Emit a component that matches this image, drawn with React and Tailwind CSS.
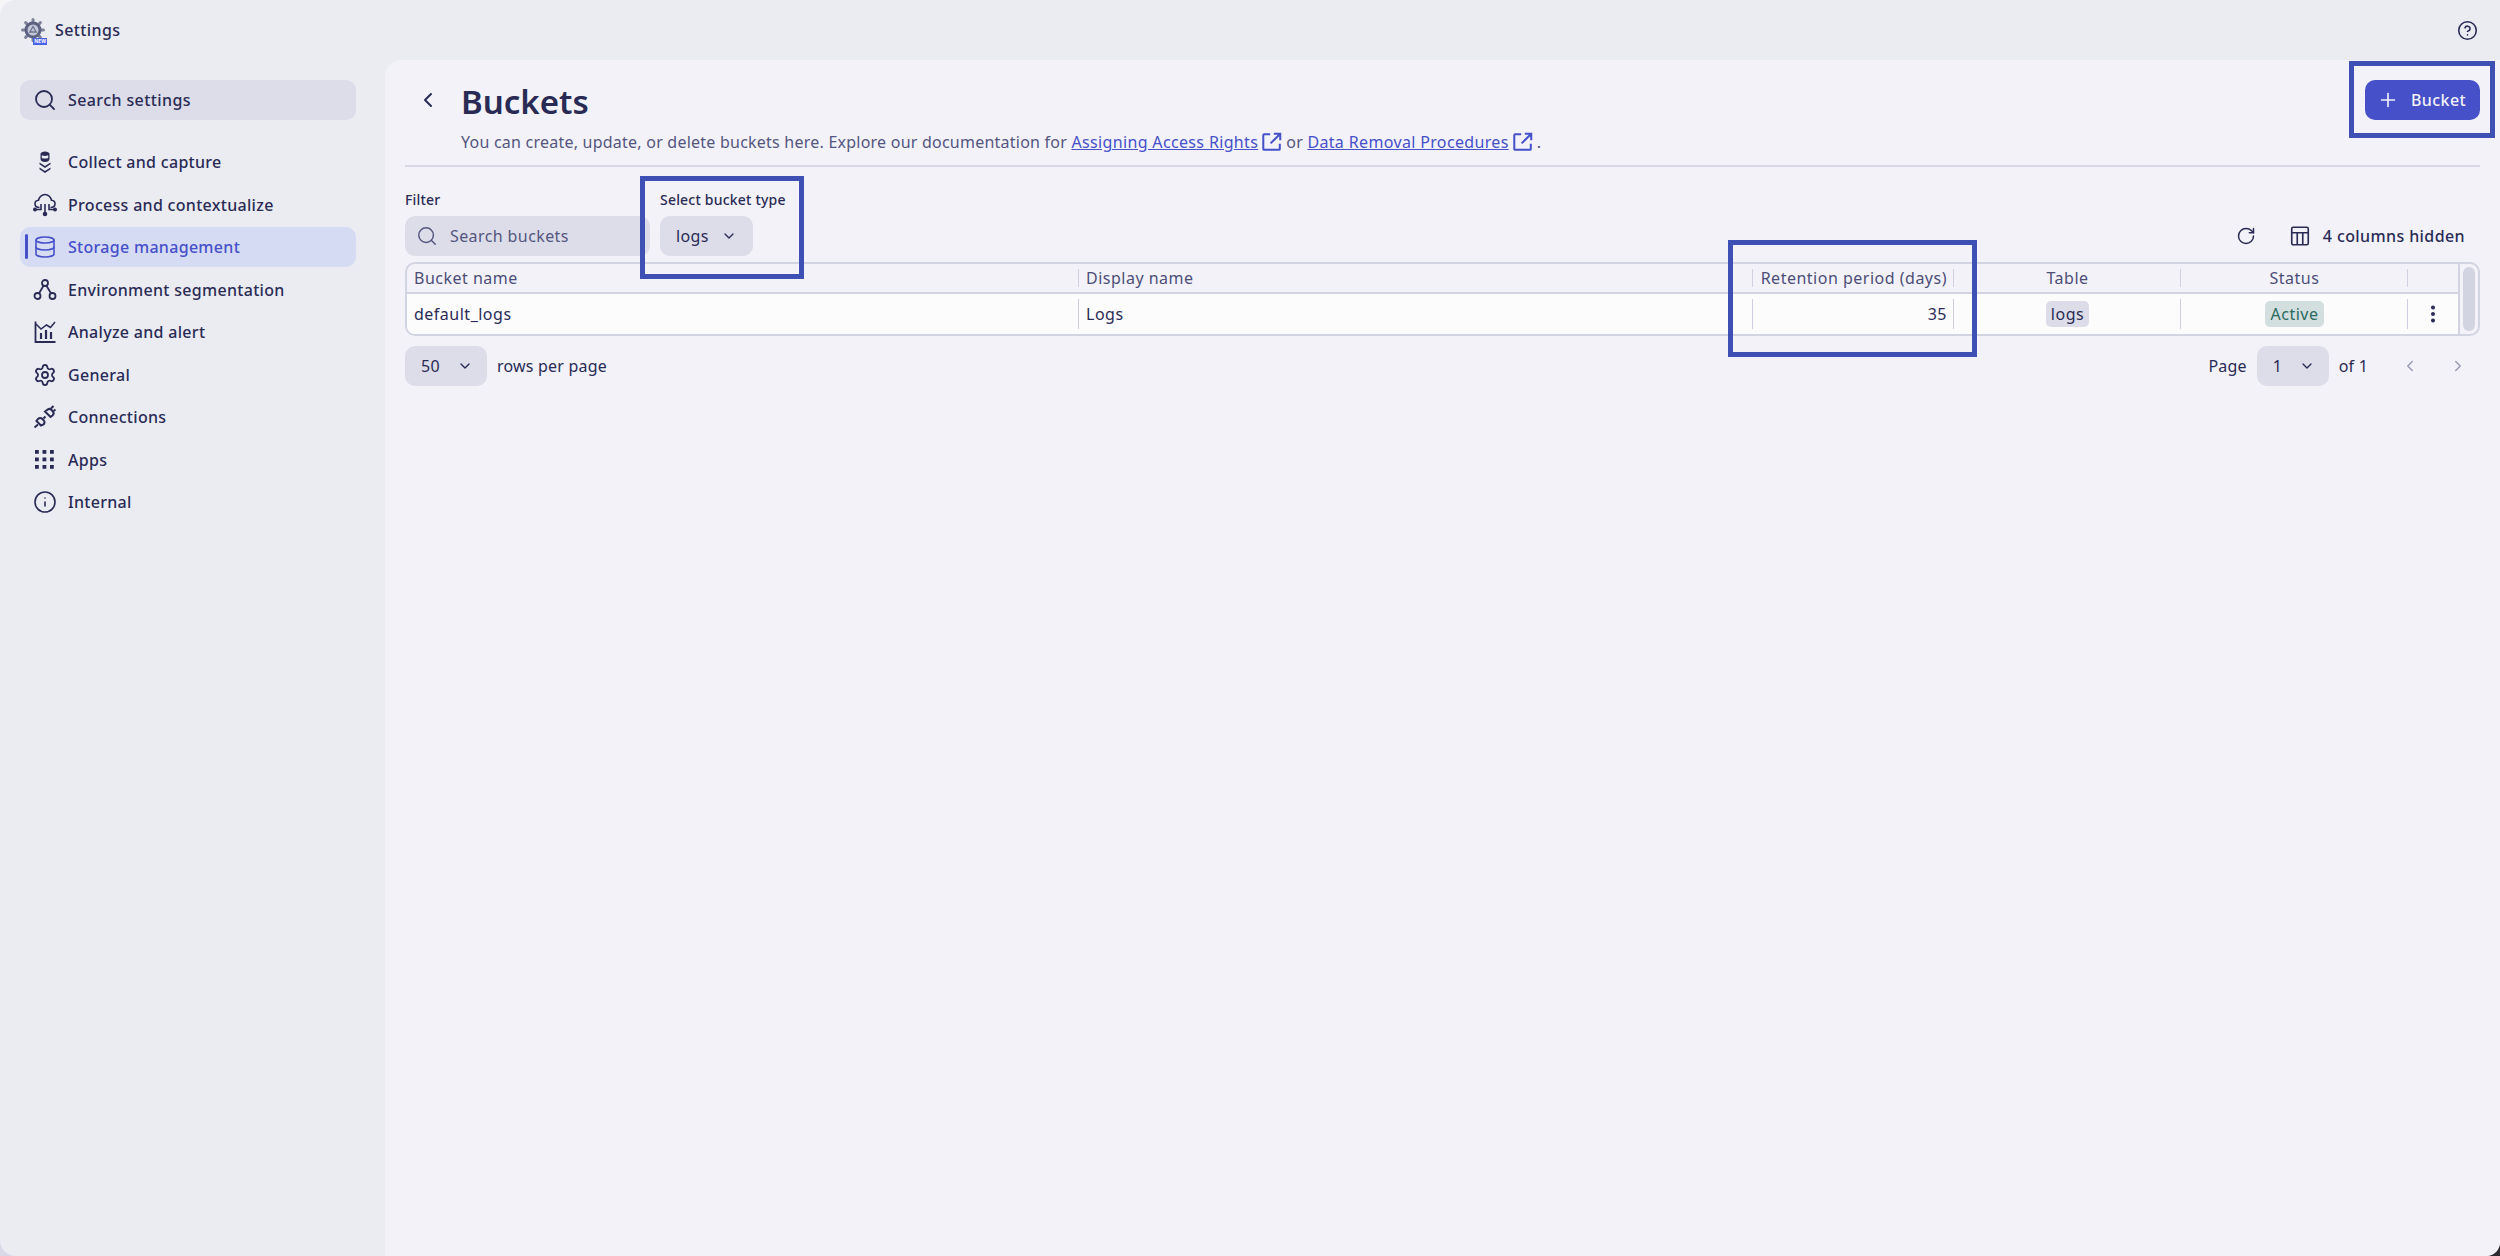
import React from "react";
import { Search, ChevronDown, ChevronLeft, ChevronRight, Plus, RotateCw, CircleHelp, Database, Settings, Info, EllipsisVertical } from "lucide-react";

const ICON = { width: 24, height: 24, viewBox: "0 0 24 24", fill: "none", stroke: "currentColor", strokeWidth: 1.8 };

const LogoIcon = () => (
  <svg width="24" height="24" viewBox="0 0 24 24">
    <g stroke="#7d8299" strokeWidth="3" strokeLinecap="round">
      <path d="M12 1.500v21M1.500 12h21M4.600 4.600l14.800 14.800M19.400 4.600L4.600 19.400" />
    </g>
    <circle cx="12" cy="12" r="8.500" fill="#5c6280" />
    <circle cx="12" cy="12" r="5.500" fill="#c5c8d8" />
    <path d="M12 8.500l3.200 5.500H8.800L12 8.500Z" fill="none" stroke="#6d7290" strokeWidth="1.300" />
  </svg>
);

const CollectIcon = () => (
  <svg {...ICON}>
    <path d="M7.500 3.800C7.500 2.500 9.500 1.500 12 1.500s4.500 1 4.500 2.300V9c0 1.800-2 3-4.500 3s-4.500-1.200-4.500-3V3.800Z" fill="currentColor" stroke="none" />
    <path d="M8.800 5.300c2 .8 4.400.8 6.400 0V8c-2 .8-4.400.8-6.400 0V5.300Z" fill="#ebecf2" stroke="none" />
    <path d="M6.500 12.500L12 16l5.500-3.500v1.800L12 18l-5.500-3.700v-1.800Z" fill="currentColor" stroke="none" />
    <path d="M6.500 17.500L12 21l5.500-3.500v1.800L12 23l-5.500-3.700v-1.800Z" fill="currentColor" stroke="none" />
  </svg>
);

const CloudIcon = () => (
  <svg {...ICON} strokeWidth={1.6}>
    <path d="M6.500 14.500C3.800 14.500 2 13 2 10.800 2 8.800 3.500 7.500 5.500 7.300 6 4.300 8.700 1.500 12 1.500s6 2.800 6.500 5.800c2 .2 3.500 1.500 3.500 3.500 0 2.200-1.800 3.700-4.500 3.700" />
    <path d="M12 11v9.500M8 11v5.500H2M16 11v5.500h6" />
    <circle cx="2" cy="16.500" r="1.200" fill="currentColor" />
    <circle cx="22" cy="16.500" r="1.200" fill="currentColor" />
    <circle cx="12" cy="21" r="1.500" fill="currentColor" />
  </svg>
);

const SegmentIcon = () => (
  <svg {...ICON}>
    <circle cx="12" cy="5" r="3" />
    <circle cx="4.500" cy="18" r="3" />
    <circle cx="19.500" cy="18" r="3" />
    <path d="M10.500 7.700l-4.500 7.700M13.500 7.700l4.500 7.700" />
  </svg>
);

const AnalyzeIcon = () => (
  <svg {...ICON}>
    <path d="M2.500 1.500v20.500h20" />
    <path d="M3 4l5 5 5.500-4 4 2.500L22 2" strokeWidth="1.500" />
    <path d="M8 13v6M13 10v9M18 12v7" strokeWidth="2.200" />
  </svg>
);

const PlugIcon = () => (
  <svg {...ICON} strokeWidth={2}>
    <path d="M1.500 22.500l3.500-3" />
    <path d="M3.500 16l4.500 4.500 2.500-1c1.300-1.300 1.300-3 .2-4.100l-1.600-1.600c-1.100-1.100-2.800-1.100-4.100.2l-1.500 2Z" />
    <path d="M10.500 13.500l2-2" />
    <path d="M12 6.500l5.500 5.500 2-1.500c1.300-1.300 1.300-3.200.2-4.300l-1.400-1.400c-1.100-1.100-3-1.100-4.300.2L12 6.500Z" />
    <path d="M18 3.500l2.500-2.500M20.500 6l2-1.500" />
  </svg>
);

const AppsIcon = () => (
  <svg {...ICON} fill="currentColor" stroke="none">
    {[2, 9.500, 17].flatMap((y) => [2, 9.500, 17].map((x) => <rect key={`${x}-${y}`} x={x} y={y} width="3.800" height="3.800" />))}
  </svg>
);

const ColumnsIcon = () => (
  <svg {...ICON} width={22} height={22} className="ml-[33px]">
    <rect x="3" y="2.500" width="18" height="19" rx="1.500" />
    <path d="M3 8.500h18M9 8.500v13M15 8.500v13" />
  </svg>
);

const ExternalIcon = () => (
  <svg {...ICON} width={22} height={22} strokeWidth={2.200} className="text-[#4650c9] mx-[3px] shrink-0">
    <path d="M10 3.500H3.500a1 1 0 0 0-1 1v15a1 1 0 0 0 1 1h16a1 1 0 0 0 1-1V14" />
    <path d="M10.500 13.500L20.500 3.500M14 3h7v7" />
  </svg>
);

const NAV = [
  { label: "Collect and capture", icon: <CollectIcon /> },
  { label: "Process and contextualize", icon: <CloudIcon /> },
  { label: "Storage management", icon: <Database size={24} strokeWidth={1.6} />, active: true },
  { label: "Environment segmentation", icon: <SegmentIcon /> },
  { label: "Analyze and alert", icon: <AnalyzeIcon /> },
  { label: "General", icon: <Settings size={24} strokeWidth={1.8} /> },
  { label: "Connections", icon: <PlugIcon /> },
  { label: "Apps", icon: <AppsIcon /> },
  { label: "Internal", icon: <Info size={24} strokeWidth={1.6} /> },
];

const Callout = ({ className }) => (
  <div className={`absolute border-[5px] border-[#3f50b5] pointer-events-none ${className}`} />
);

const Cell = ({ className = "", sep = true, children }) => (
  <div className={`relative flex items-center px-[7px] ${className}`}>
    {children}
    {sep && <span className="absolute right-0 top-[5px] bottom-[5px] w-px bg-[#d0d1e0]" />}
  </div>
);

const Selector = ({ value, className }) => (
  <div className={`flex items-center justify-between h-10 rounded-[10px] bg-[#dcdde8] text-[#2a2b55] ${className}`}>
    <span>{value}</span>
    <ChevronDown size={16} strokeWidth={2} />
  </div>
);

function Sidebar() {
  return (
    <aside className="w-[385px] shrink-0 px-5 pt-5">
      <div className="flex items-center gap-[11px] h-10 w-[336px] pl-[13px] rounded-[10px] bg-[#dcdde8] font-medium">
        <Search size={24} strokeWidth={1.8} />
        <span>Search settings</span>
      </div>
      <nav className="mt-[22px] flex flex-col gap-[2.5px] w-[336px] font-medium tracking-[0.3px]">
        {NAV.map((n) => (
          <div
            key={n.label}
            className={`relative flex items-center gap-[11px] h-10 pl-[13px] rounded-[10px] ${n.active ? "bg-[#d6dbf4] text-[#4650c9]" : ""}`}
          >
            {n.active && <span className="absolute left-[5px] top-[7px] h-[25px] w-[3px] rounded bg-[#4650c9]" />}
            {n.icon}
            <span>{n.label}</span>
          </div>
        ))}
      </nav>
    </aside>
  );
}

function BucketsTable() {
  return (
    <div className="mt-1.5 flex h-[74px] rounded-[10px] border-2 border-[#d3d4e2] overflow-hidden tracking-[0.5px]">
      <div className="flex-1 flex flex-col">
        <div className="grid grid-cols-[672px_674px_201px_227px_227px_1fr] h-[30px] border-b-2 border-[#d3d4e2] text-[#4d4e78]">
          <Cell>Bucket name</Cell>
          <Cell>Display name</Cell>
          <Cell className="justify-end">Retention period (days)</Cell>
          <Cell className="justify-center">Table</Cell>
          <Cell className="justify-center">Status</Cell>
          <Cell sep={false} />
        </div>
        <div className="grid grid-cols-[672px_674px_201px_227px_227px_1fr] flex-1 bg-[#fcfcfd]">
          <Cell>default_logs</Cell>
          <Cell>Logs</Cell>
          <Cell className="justify-end">35</Cell>
          <Cell className="justify-center">
            <span className="px-[5px] rounded-[5px] bg-[#dcdde8] leading-[26px]">logs</span>
          </Cell>
          <Cell className="justify-center">
            <span className="px-[6px] rounded-[5px] bg-[#d3dede] text-[#2a6b5e] leading-[26px]">Active</span>
          </Cell>
          <Cell sep={false} className="justify-center">
            <EllipsisVertical size={22} strokeWidth={2.4} />
          </Cell>
        </div>
      </div>
      <div className="w-[20px] border-l-2 border-[#d3d4e2] px-[3px] py-[3px]">
        <div className="h-full rounded-full bg-[#d3d4e2]" />
      </div>
    </div>
  );
}

export default function App() {
  return (
    <div className="relative h-[1256px] bg-gradient-to-b from-[#f6f6f9] to-[#d8d8e8] font-['Noto_Sans',sans-serif]">
      <div className="absolute right-0 bottom-0 w-4 h-4 bg-[#2d2a30]" />
      <div className="relative h-full flex flex-col rounded-tl-[16px] rounded-bl-[16px] rounded-br-[14px] bg-[#ebecf2] text-[16px] leading-6 tracking-[0.4px] text-[#2a2b55] overflow-hidden">
        <header className="flex items-center justify-between h-[60px] shrink-0 pl-[21px] pr-[22px]">
          <div className="flex items-center gap-[10px]">
            <div className="relative w-[24px] h-[24px]">
              <LogoIcon />
              <span className="absolute right-[-2px] bottom-[-3px] h-[7px] px-px bg-[#4a62e8] text-white text-[5px] leading-[7px] tracking-normal font-bold">NEW</span>
            </div>
            <span className="font-medium">Settings</span>
          </div>
          <CircleHelp size={21} strokeWidth={1.8} />
        </header>

        <div className="flex flex-1">
          <Sidebar />
          <main className="flex-1 rounded-tl-[16px] bg-[#f2f2f8] pl-5 pr-5 pt-5">
            <div className="flex items-start justify-between">
              <div className="flex items-start">
                <ChevronLeft size={24} strokeWidth={2} className="ml-[11px] mt-2" />
                <div className="ml-[21px]">
                  <h1 className="mt-[2px] text-[33px] leading-10 font-semibold tracking-normal">Buckets</h1>
                  <p className="mt-2 leading-6 tracking-[0.23px] text-[#55567f] flex items-center">
                    You can create, update, or delete buckets here. Explore our documentation for&nbsp;
                    <span className="text-[#4650c9] underline tracking-[0.35px]">Assigning Access Rights</span>
                    <ExternalIcon />
                    or&nbsp;
                    <span className="text-[#4650c9] underline tracking-[0.35px]">Data Removal Procedures</span>
                    <ExternalIcon />.
                  </p>
                </div>
              </div>
              <button className="flex items-center gap-[12px] h-10 w-[115px] pl-[12px] rounded-[10px] bg-[#4650c9] text-[#f2f2f8] font-medium">
                <Plus size={22} strokeWidth={1.8} />
                <span>Bucket</span>
              </button>
            </div>

            <div className="mt-[11px] h-0.5 bg-[#d8d8e6]" />

            <div className="mt-[24px] flex items-end">
              <div>
                <div className="text-[14px] leading-[18px] font-medium tracking-[0.2px]">Filter</div>
                <div className="mt-[7px] flex items-center gap-[12px] h-10 w-[245px] pl-[11px] rounded-[10px] bg-[#dcdde8] text-[#55567f]">
                  <Search size={22} strokeWidth={1.6} />
                  <span>Search buckets</span>
                </div>
              </div>
              <div className="ml-[10px]">
                <div className="text-[14px] leading-[18px] font-medium tracking-[0.2px]">Select bucket type</div>
                <Selector value="logs" className="mt-[7px] w-[93px] px-4" />
              </div>
              <div className="ml-auto flex items-center h-10 pr-[15px] font-medium">
                <RotateCw size={20} strokeWidth={1.8} />
                <ColumnsIcon />
                <span className="ml-[12px]">4 columns hidden</span>
              </div>
            </div>

            <BucketsTable />

            <div className="mt-[10px] flex items-center">
              <Selector value="50" className="w-[82px] pl-4 pr-[14px]" />
              <span className="ml-[10px] tracking-[0.2px]">rows per page</span>
              <div className="ml-auto flex items-center pr-[13px]">
                <span className="tracking-[0.2px]">Page</span>
                <Selector value="1" className="ml-[10px] w-[72px] pl-4 pr-[14px]" />
                <span className="ml-[10px] tracking-[0.2px]">of 1</span>
                <ChevronLeft size={18} strokeWidth={2} className="ml-[33px] text-[#9b9cb8]" />
                <ChevronRight size={18} strokeWidth={2} className="ml-[30px] text-[#9b9cb8]" />
              </div>
            </div>
          </main>
        </div>

        <Callout className="left-[640px] top-[176px] w-[164px] h-[103px]" />
        <Callout className="left-[1728px] top-[240px] w-[249px] h-[117px]" />
        <Callout className="left-[2349px] top-[61px] w-[146px] h-[77px]" />
      </div>
    </div>
  );
}
